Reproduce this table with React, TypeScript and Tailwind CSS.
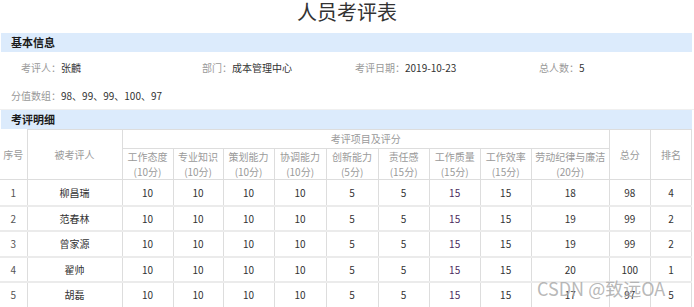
const font = "font-['Microsoft_YaHei','Noto_Sans_CJK_SC','Noto_Sans',sans-serif]";

const items = [
  { name: "工作态度", score: "(10分)", w: "w-[51px]" },
  { name: "专业知识", score: "(10分)", w: "w-[50px]" },
  { name: "策划能力", score: "(10分)", w: "w-[51px]" },
  { name: "协调能力", score: "(10分)", w: "w-[52px]" },
  { name: "创新能力", score: "(5分)", w: "w-[52px]" },
  { name: "责任感", score: "(15分)", w: "w-[51px]" },
  { name: "工作质量", score: "(15分)", w: "w-[51px]" },
  { name: "工作效率", score: "(15分)", w: "w-[51px]" },
  { name: "劳动纪律与廉洁", score: "(20分)", w: "w-[78px]" },
];

const rows = [
  { no: 1, name: "柳昌瑞", scores: [10, 10, 10, 10, 5, 5, 15, 15, 18], total: 98, rank: 4 },
  { no: 2, name: "范春林", scores: [10, 10, 10, 10, 5, 5, 15, 15, 19], total: 99, rank: 2 },
  { no: 3, name: "曾家源", scores: [10, 10, 10, 10, 5, 5, 15, 15, 19], total: 99, rank: 2 },
  { no: 4, name: "翟帅", scores: [10, 10, 10, 10, 5, 5, 15, 15, 20], total: 100, rank: 1 },
  { no: 5, name: "胡磊", scores: [10, 10, 10, 10, 5, 5, 15, 15, 17], total: 97, rank: 5 },
];

function SectionBar({ title }: { title: string }) {
  return (
    <div className="ml-[1px] h-[19px] w-[691px] bg-[#dcebfc] pl-[10px] text-[11px] font-bold leading-[19px] text-[#1a1a1a]">
      {title}
    </div>
  );
}

function Info({ label, value, w }: { label: string; value: string; w: string }) {
  return (
    <div className={`${w} shrink-0 whitespace-nowrap`}>
      <span className="text-[#999]">{label}：</span>
      <span className="text-[#333]">{value}</span>
    </div>
  );
}

export default function App() {
  return (
    <div className={`relative h-[307px] w-[694px] overflow-hidden bg-white ${font}`}>
      {/* Title */}
      <h1 className="h-[33px] text-center text-[20px] leading-[24px] text-[#333]">人员考评表</h1>

      {/* Basic info */}
      <SectionBar title="基本信息" />
      <div className="flex h-[30px] items-center pl-[21px] text-[10px]">
        <Info label="考评人" value="张麟" w="w-[181px]" />
        <Info label="部门" value="成本管理中心" w="w-[153px]" />
        <Info label="考评日期" value="2019-10-23" w="w-[184px]" />
        <Info label="总人数" value="5" w="w-[120px]" />
      </div>
      <div className="flex h-[28px] items-center border-b border-[#f0f0f0] pl-[11px] text-[10px]">
        <Info label="分值数组" value="98、99、99、100、97" w="w-[300px]" />
      </div>

      {/* Detail */}
      <SectionBar title="考评明细" />
      <table className="w-[692px] table-fixed border-collapse text-center text-[10px]">
        <colgroup>
          <col className="w-[27px]" />
          <col className="w-[95px]" />
          {items.map((it) => (
            <col key={it.name} className={it.w} />
          ))}
          <col className="w-[41px]" />
          <col className="w-[41px]" />
        </colgroup>
        <thead className="text-[#9a9a9a]">
          <tr className="h-[19px]">
            <th rowSpan={2} className="border-r border-b border-[#ddd] font-normal">序号</th>
            <th rowSpan={2} className="border border-[#ddd] font-normal">被考评人</th>
            <th colSpan={9} className="border border-[#ddd] font-normal leading-[18px]">考评项目及评分</th>
            <th rowSpan={2} className="border border-[#ddd] font-normal">总分</th>
            <th rowSpan={2} className="border border-[#ddd] font-normal">排名</th>
          </tr>
          <tr className="h-[29px]">
            {items.map((it) => (
              <th key={it.name} className="whitespace-nowrap border border-[#ddd] font-normal leading-[15px]">
                <div>{it.name}</div>
                <div>{it.score}</div>
              </th>
            ))}
          </tr>
        </thead>
        <tbody className="text-[#333]">
          {rows.map((r, i) => (
            <tr key={r.no} className={i % 2 === 0 ? "h-[26px]" : "h-[25px]"}>
              <td className="border-r border-b-2 border-r-[#ddd] border-b-[#ebebeb] text-[#555]">{r.no}</td>
              <td className="border-x border-b-2 border-x-[#ddd] border-b-[#ebebeb]">{r.name}</td>
              {r.scores.map((s, j) => (
                <td
                  key={j}
                  className={`border-x border-b-2 border-x-[#ddd] border-b-[#ebebeb] ${j === 6 ? "text-[#4b2c5e]" : ""}`}
                >
                  {s}
                </td>
              ))}
              <td className="border-x border-b-2 border-x-[#ddd] border-b-[#ebebeb]">{r.total}</td>
              <td className="border-x border-b-2 border-x-[#ddd] border-b-[#ebebeb]">{r.rank}</td>
            </tr>
          ))}
        </tbody>
      </table>

      {/* Watermark */}
      <div className="pointer-events-none absolute left-[537px] top-[275px] whitespace-nowrap text-[18px] text-[#a6a6a6]/80">
        CSDN @致远OA
      </div>
    </div>
  );
}
